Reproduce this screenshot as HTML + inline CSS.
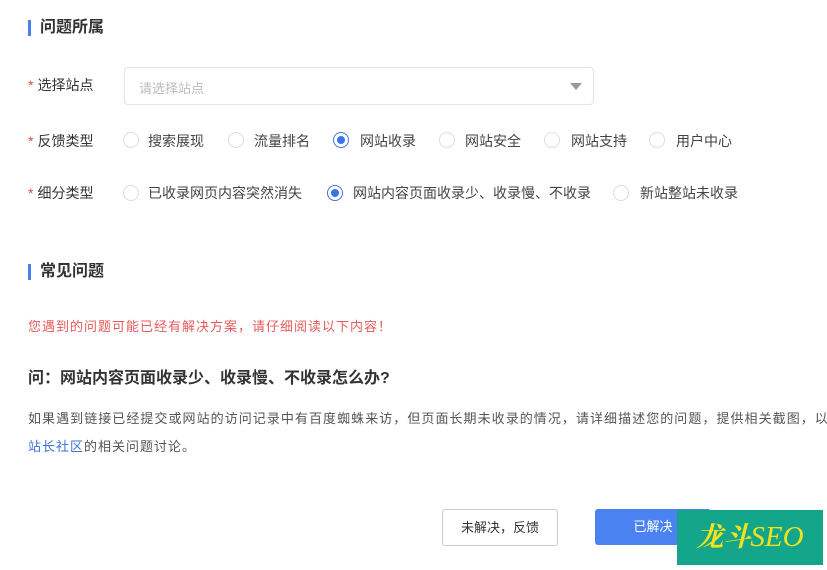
<!DOCTYPE html>
<html><head><meta charset="utf-8"><style>
*{margin:0;padding:0;box-sizing:border-box}
body{width:827px;height:570px;overflow:hidden;background:#fff;font-family:"Liberation Sans","Noto Sans CJK SC",sans-serif;color:#333;position:relative}
.a{position:absolute;white-space:nowrap}
.h{font-size:16px;font-weight:bold;color:#333;padding-left:12px;line-height:18px}
.h:before{content:"";position:absolute;left:0;top:1px;width:3px;height:16px;background:#4e7ff0}
.lbl{font-size:14px;color:#333;line-height:16px}
.lbl b{color:#e04646;font-weight:normal;margin-right:4px}
.r{position:absolute;width:16px;height:16px;border:1px solid #ddd;border-radius:50%;background:#fff}
.r.on{border-color:#3b73e8}
.r.on:after{content:"";position:absolute;left:3px;top:3px;width:8px;height:8px;border-radius:50%;background:#3b73e8}
.t{font-size:14px;color:#444;line-height:16px}
</style></head><body>
<div class="a h" style="left:28px;top:19px">问题所属</div>

<div class="a lbl" style="left:28px;top:77px"><b>*</b>选择站点</div>
<div class="a" style="left:124px;top:67px;width:470px;height:38px;border:1px solid #e3e3e3;border-radius:4px"></div>
<div class="a" style="left:139px;top:78px;font-size:13px;color:#bbb">请选择站点</div>
<div class="a" style="left:570px;top:83px;width:0;height:0;border-left:6px solid transparent;border-right:6px solid transparent;border-top:7px solid #999"></div>

<div class="a lbl" style="left:28px;top:133px"><b>*</b>反馈类型</div>
<div class="r" style="left:123px;top:132px"></div><div class="a t" style="left:148px;top:133px">搜索展现</div>
<div class="r" style="left:228px;top:132px"></div><div class="a t" style="left:254px;top:133px">流量排名</div>
<div class="r on" style="left:333px;top:132px"></div><div class="a t" style="left:360px;top:133px">网站收录</div>
<div class="r" style="left:439px;top:132px"></div><div class="a t" style="left:465px;top:133px">网站安全</div>
<div class="r" style="left:544px;top:132px"></div><div class="a t" style="left:571px;top:133px">网站支持</div>
<div class="r" style="left:649px;top:132px"></div><div class="a t" style="left:676px;top:133px">用户中心</div>

<div class="a lbl" style="left:28px;top:185px"><b>*</b>细分类型</div>
<div class="r" style="left:123px;top:185px"></div><div class="a t" style="left:148px;top:185px">已收录网页内容突然消失</div>
<div class="r on" style="left:327px;top:185px"></div><div class="a t" style="left:353px;top:185px">网站内容页面收录少、收录慢、不收录</div>
<div class="r" style="left:613px;top:185px"></div><div class="a t" style="left:640px;top:185px">新站整站未收录</div>

<div class="a h" style="left:28px;top:263px">常见问题</div>
<div class="a" style="left:28px;top:316px;font-size:13px;color:#e55a5a;letter-spacing:1px">您遇到的问题可能已经有解决方案，请仔细阅读以下内容！</div>
<div class="a" style="left:28px;top:364px;font-size:16px;font-weight:bold;color:#333">问：网站内容页面收录少、收录慢、不收录怎么办?</div>
<div class="a" style="left:28px;top:408px;font-size:13px;color:#555;letter-spacing:1.05px">如果遇到链接已经提交或网站的访问记录中有百度蜘蛛来访，但页面长期未收录的情况，请详细描述您的问题，提供相关截图，以便</div>
<div class="a" style="left:28px;top:436px;font-size:13px;color:#555;letter-spacing:1px"><span style="color:#3b73d8">站长社区</span>的相关问题讨论。</div>

<div class="a" style="left:442px;top:509px;width:116px;height:37px;border:1px solid #ccc;border-radius:3px;font-size:13px;color:#333;text-align:center;line-height:35px">未解决，反馈</div>
<div class="a" style="left:595px;top:509px;width:116px;height:36px;background:#4a82f2;border-radius:3px;font-size:13px;color:#fff;text-align:center;line-height:36px">已解决</div>
<div class="a" style="left:677px;top:510px;width:146px;height:55px;background:#14a68b;color:#f2e21e;font-family:'Liberation Serif','Noto Serif CJK SC',serif;font-style:italic;font-weight:bold;font-size:27px;line-height:55px;text-align:center">龙斗<span style="font-weight:normal;font-size:29px">SEO</span></div>
</body></html>
